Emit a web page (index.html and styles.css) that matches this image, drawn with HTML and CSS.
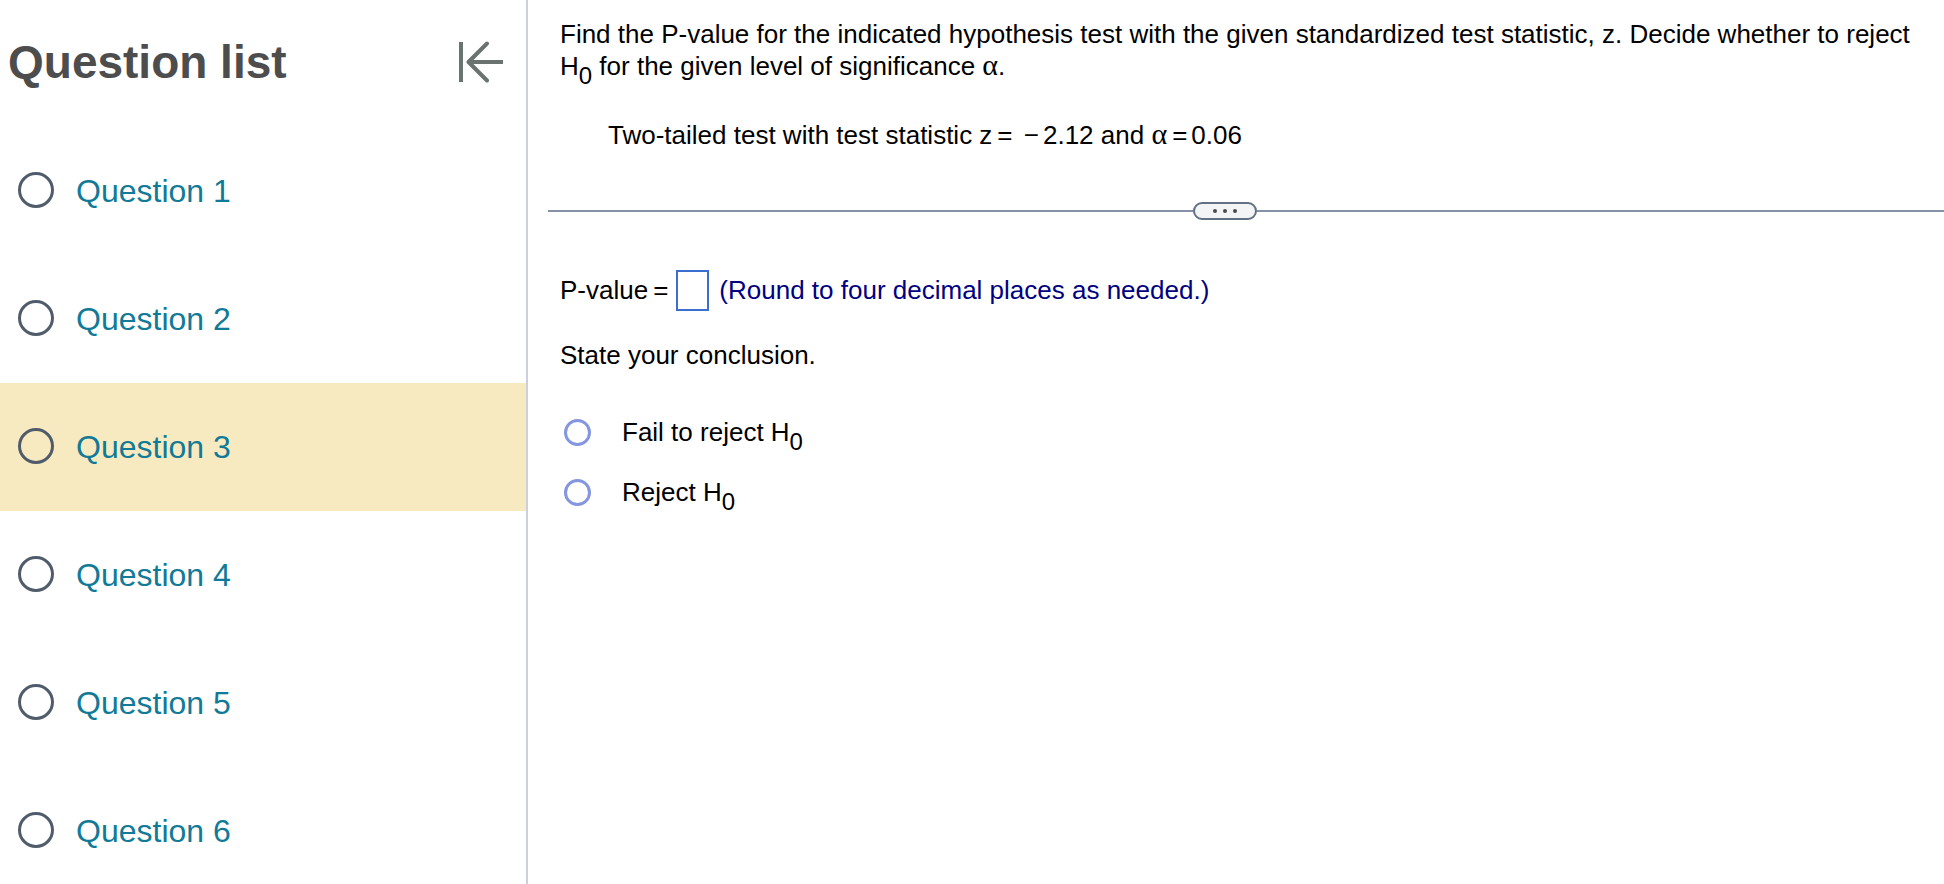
FILE: index.html
```html
<!DOCTYPE html>
<html lang="en">
<head>
    <meta charset="UTF-8">
    <meta name="viewport" content="width=device-width, initial-scale=1.0">
    <title>Question list</title>
    <link rel="stylesheet" href="styles.css">
</head>
<body>
    <aside class="sidebar">
        <div class="sidebar-header">
            <h1>Question list</h1>
            <button type="button" class="collapse" aria-label="Collapse question list">
                <svg width="46" height="42" viewBox="0 0 46 42" fill="none" stroke="#6a7370" stroke-width="4" stroke-linejoin="round">
                    <path d="M3 1V41"/>
                    <path stroke-linecap="round" d="M29 2.500L10.500 21L29 39.500"/>
                    <path d="M10.500 21H45"/>
                </svg>
            </button>
        </div>
        <nav class="question-list">
            <a href="#q1" class="question"><span class="status"></span>Question 1</a>
            <a href="#q2" class="question"><span class="status"></span>Question 2</a>
            <a href="#q3" class="question active" aria-current="true"><span class="status"></span>Question 3</a>
            <a href="#q4" class="question"><span class="status"></span>Question 4</a>
            <a href="#q5" class="question"><span class="status"></span>Question 5</a>
            <a href="#q6" class="question"><span class="status"></span>Question 6</a>
        </nav>
    </aside>

    <main class="exercise">
        <p class="prompt">Find the P-value for the indicated hypothesis test with the given standardized test statistic, z. Decide whether to reject H<sub>0</sub> for the given level of significance <span class="greek">α</span>.</p>
        <p class="given">Two-tailed test with test statistic z<span class="op">=</span> <span class="sign">−</span>2.12 and <span class="greek">α</span><span class="op">=</span>0.06</p>

        <div class="divider">
            <button type="button" class="handle" aria-label="Resize">
                <span class="dot"></span><span class="dot"></span><span class="dot"></span>
            </button>
        </div>

        <form class="answer">
            <div class="answer-row">
                <label for="pvalue">P-value<span class="op">=</span></label>
                <input type="text" id="pvalue" class="answer-box">
                <span class="hint">(Round to four decimal places as needed.)</span>
            </div>
            <p class="conclusion">State your conclusion.</p>
            <div class="choice">
                <input type="radio" name="conclusion" id="fail">
                <label for="fail">Fail to reject H<sub>0</sub></label>
            </div>
            <div class="choice">
                <input type="radio" name="conclusion" id="reject">
                <label for="reject">Reject H<sub>0</sub></label>
            </div>
        </form>
    </main>
</body>
</html>
```

FILE: styles.css
```css
* {
    box-sizing: border-box;
}
body {
    margin: 0;
    display: flex;
    height: 100vh;
    overflow: hidden;
    font-family: "Liberation Sans", Arial, sans-serif;
    font-size: 26px;
    line-height: 32px;
    color: #000;
    background-color: #fff;
}
h1, p {
    margin: 0;
}

/* sidebar */
.sidebar {
    flex: 0 0 528px;
    border-right: 2px solid #cbcfe0;
    overflow: hidden;
}
.sidebar-header {
    display: flex;
    justify-content: space-between;
    align-items: center;
    height: 127px;
    padding: 0 22px 3px 8px;
}
.sidebar-header h1 {
    font-size: 46px;
    line-height: 56px;
    color: #4d4d4d;
}
.collapse {
    display: flex;
    padding: 0;
    border: none;
    background: none;
    cursor: pointer;
}
.question {
    display: flex;
    align-items: center;
    gap: 22px;
    height: 128px;
    padding-left: 18px;
    font-size: 32px;
    color: #117a98;
    text-decoration: none;
}
.question.active {
    background-color: #f8eac0;
}
.status {
    width: 36px;
    height: 36px;
    margin-bottom: 2px;
    border: 3px solid #505c69;
    border-radius: 50%;
}

/* exercise */
.exercise {
    flex: 1;
    min-width: 0;
    padding: 18px 0 0 20px;
}
.prompt {
    padding: 0 16px 0 12px;
}
.given {
    padding: 37px 0 0 60px;
}
sub {
    font-size: 24px;
    line-height: 12px;
    vertical-align: -9px;
}
.greek {
    font-family: "Liberation Serif", "Times New Roman", serif;
    font-size: 30px;
    line-height: 26px;
}
.op {
    margin: 0 4px 0 5px;
}
.sign {
    margin-right: 4px;
}
.divider {
    display: flex;
    align-items: center;
    margin-top: 51px;
}
.divider::before,
.divider::after {
    content: "";
    flex: 1;
    height: 2px;
    background-color: #8690a6;
}
.divider::before {
    flex: 0 1 645px;
}
.handle {
    display: flex;
    justify-content: center;
    align-items: center;
    gap: 6px;
    width: 64px;
    height: 18px;
    padding: 0;
    border: 2px solid #617083;
    border-radius: 9px;
    background-color: #f2f4f6;
    cursor: pointer;
}
.dot {
    width: 4px;
    height: 4px;
    border-radius: 50%;
    background-color: #4a4a4a;
}
.answer {
    padding: 50px 16px 0 12px;
}
.answer-row {
    display: flex;
    align-items: center;
}
.answer-row label,
.hint {
    margin-bottom: 2px;
}
.answer-box {
    width: 33px;
    height: 41px;
    margin: 0 10px 0 4px;
    padding: 0 4px;
    border: 2px solid #3a6fd0;
    font: inherit;
}
.hint {
    color: #000080;
}
.conclusion {
    margin: 28px 0 31px;
}
.choice {
    display: flex;
    align-items: center;
    height: 60px;
}
.choice input {
    appearance: none;
    width: 27px;
    height: 27px;
    margin: 0 31px 0 4px;
    border: 3px solid #8496e0;
    border-radius: 50%;
}
```
